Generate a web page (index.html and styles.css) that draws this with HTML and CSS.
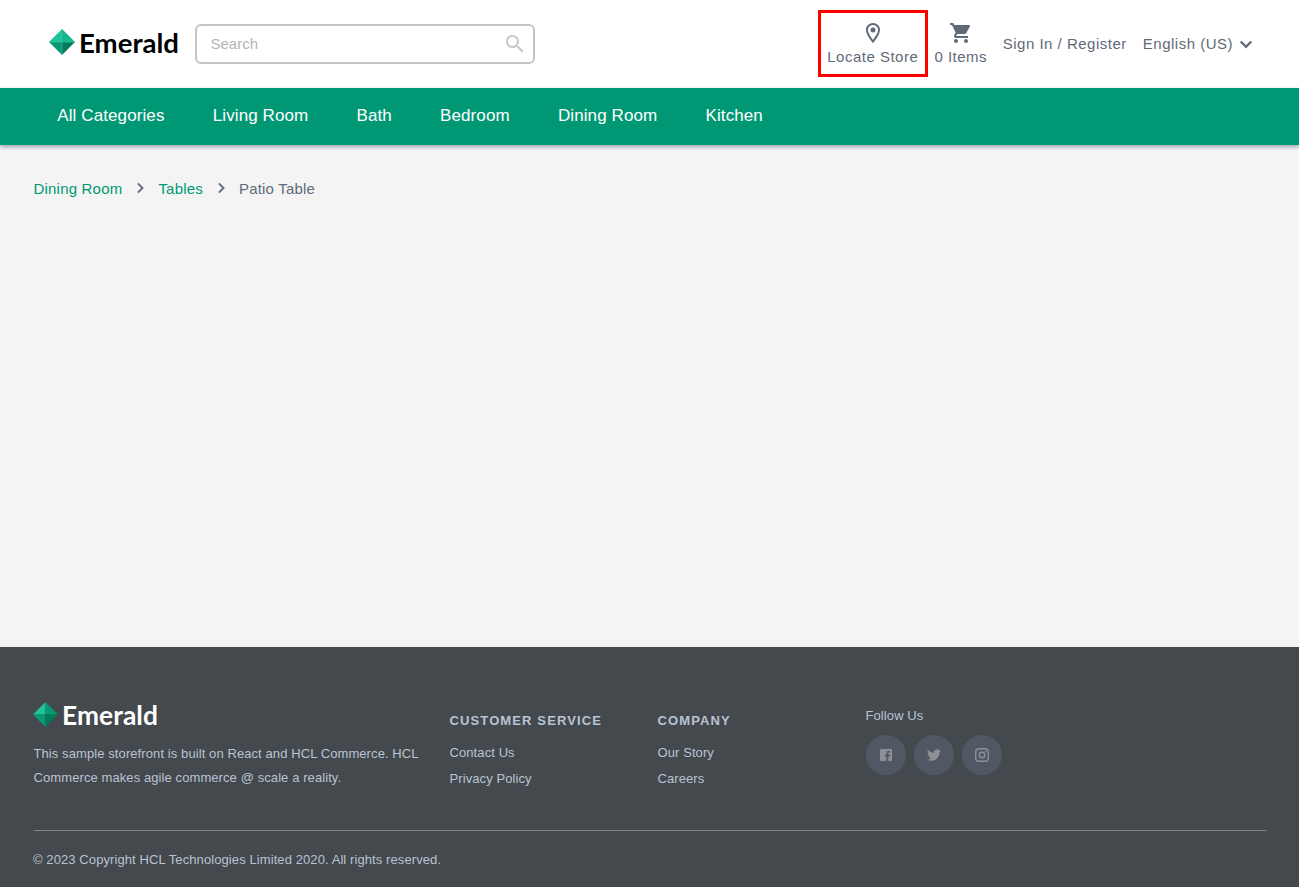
FILE: index.html
```html
<!DOCTYPE html>
<html lang="en">
<head>
<meta charset="utf-8">
<title>Emerald</title>
<link rel="stylesheet" href="styles.css">
</head>
<body>
<header class="header">
  <a class="logo">
    <svg class="gem" viewBox="0 0 26 26"><path fill="#1fc29c" d="M13 0v13H0z"/><path fill="#14b48c" d="M13 0l13 13H13z"/><path fill="#069a74" d="M0 13h13v13z"/><path fill="#047a5b" d="M13 13h13L13 26z"/><path stroke="#4cc5a5" stroke-width=".6" d="M13 0v26M0 13h26"/></svg>
    <svg class="wordmark" width="100" height="32"><text x="0" y="26" textLength="100" lengthAdjust="spacingAndGlyphs">Emerald</text></svg>
  </a>
  <div class="search">
    <span>Search</span>
    <svg width="24" height="24" viewBox="0 0 24 24"><path d="M15.5 14h-.79l-.28-.27C15.41 12.59 16 11.11 16 9.5 16 5.91 13.09 3 9.5 3S3 5.91 3 9.5 5.91 16 9.5 16c1.61 0 3.09-.59 4.23-1.57l.27.28v.79l5 4.99L20.49 19l-4.99-5zm-6 0C7.01 14 5 11.99 5 9.5S7.01 5 9.5 5 14 7.01 14 9.5 11.99 14 9.5 14z"/></svg>
  </div>
  <nav class="tools">
    <a class="tool locate">
      <svg width="24" height="24" viewBox="0 0 24 24"><path d="M12 2C8.13 2 5 5.13 5 9c0 5.25 7 13 7 13s7-7.75 7-13c0-3.87-3.13-7-7-7zM7 9c0-2.76 2.24-5 5-5s5 2.24 5 5c0 2.88-2.88 7.19-5 9.88C9.92 16.21 7 11.85 7 9z"/><circle cx="12" cy="9" r="2.5"/></svg>
      <span>Locate Store</span>
    </a>
    <a class="tool cart">
      <svg width="24" height="24" viewBox="0 0 24 24"><path d="M7 18c-1.1 0-1.99.9-1.99 2S5.900 22 7 22s2-.9 2-2-.9-2-2-2zM1 2v2h2l3.600 7.590-1.350 2.450c-.16.28-.25.61-.25.96 0 1.100.9 2 2 2h12v-2H7.420c-.14 0-.25-.11-.25-.25l.03-.12.900-1.630h7.450c.75 0 1.410-.41 1.750-1.030l3.580-6.490c.08-.14.12-.31.12-.48 0-.55-.45-1-1-1H5.210l-.94-2H1zm16 16c-1.100 0-1.990.9-1.990 2s.89 2 1.990 2 2-.9 2-2-.9-2-2-2z"/></svg>
      <span>0 Items</span>
    </a>
    <a class="signin">Sign In / Register</a>
    <a class="language">English (US)<svg width="24" height="24" viewBox="0 0 24 24"><path d="M6.700 9.500l5.300 5.300 5.300-5.300" fill="none" stroke="#5f6a79" stroke-width="2.300"/></svg></a>
  </nav>
</header>
<nav class="categories">
  <a>All Categories</a><a>Living Room</a><a>Bath</a><a>Bedroom</a><a>Dining Room</a><a>Kitchen</a>
</nav>
<main class="content">
  <div class="crumbs">
    <a>Dining Room</a>
    <svg width="20" height="20" viewBox="0 0 24 24"><path d="M9.500 6.500l5.500 5.500-5.500 5.500" fill="none" stroke="#5f6a79" stroke-width="2.300"/></svg>
    <a>Tables</a>
    <svg width="20" height="20" viewBox="0 0 24 24"><path d="M9.500 6.500l5.500 5.500-5.500 5.500" fill="none" stroke="#5f6a79" stroke-width="2.300"/></svg>
    <span>Patio Table</span>
  </div>
</main>
<footer class="footer">
  <div class="columns">
    <section class="about">
      <a class="logo">
        <svg class="gem" viewBox="0 0 26 26"><path fill="#1fc29c" d="M13 0v13H0z"/><path fill="#069a74" d="M13 0l13 13H13z"/><path fill="#069a74" d="M0 13h13v13z"/><path fill="#047a5b" d="M13 13h13L13 26z"/></svg>
        <svg class="wordmark" width="96" height="30"><text x="0" y="25" textLength="96" lengthAdjust="spacingAndGlyphs">Emerald</text></svg>
      </a>
      <p>This sample storefront is built on React and HCL Commerce. HCL<br>Commerce makes agile commerce @ scale a reality.</p>
    </section>
    <section class="links"><h2>CUSTOMER SERVICE</h2><a>Contact Us</a><a>Privacy Policy</a></section>
    <section class="links"><h2>COMPANY</h2><a>Our Story</a><a>Careers</a></section>
    <section class="follow">
      <span>Follow Us</span>
      <div class="socials">
        <a><svg width="12" height="12" viewBox="0 0 12 12"><path d="M.7 0h10.600q.7 0 .7.700v10.600q0 .7-.7.700H8.300V7.400h1.550l.25-1.850H8.300V4.400c0-.55.15-.9.900-.9h.95V1.850C10 1.830 9.450 1.780 8.750 1.780c-1.400 0-2.350.85-2.350 2.420v1.350H4.850V7.400H6.400V12H.7Q0 12 0 11.300V.7Q0 0 .7 0z"/></svg></a>
        <a><svg width="14" height="14" viewBox="0 0 24 24"><path d="M23.950 4.570a10 10 0 0 1-2.820.77 4.960 4.960 0 0 0 2.160-2.720c-.95.550-2 .96-3.130 1.180a4.920 4.920 0 0 0-8.380 4.480C7.690 8.100 4.070 6.130 1.640 3.160a4.820 4.820 0 0 0-.67 2.480c0 1.710.87 3.210 2.190 4.100a4.900 4.900 0 0 1-2.230-.62v.06a4.920 4.920 0 0 0 3.950 4.830 5 5 0 0 1-2.210.08 4.940 4.940 0 0 0 4.600 3.420A9.870 9.870 0 0 1 0 19.540a13.990 13.990 0 0 0 7.550 2.210c9.050 0 14-7.500 14-13.980 0-.21 0-.42-.02-.63a9.940 9.940 0 0 0 2.460-2.550z"/></svg></a>
        <a><svg width="14" height="14" viewBox="0 0 14 14"><rect x=".7" y=".7" width="12.600" height="12.600" rx="3.300" fill="none" stroke="#8d9196" stroke-width="1.400"/><circle cx="7" cy="7" r="2.800" fill="none" stroke="#8d9196" stroke-width="1.400"/><circle cx="10.600" cy="3.400" r=".8"/></svg></a>
      </div>
    </section>
  </div>
  <div class="copyright">© 2023 Copyright HCL Technologies Limited 2020. All rights reserved.</div>
</footer>
</body>
</html>
```

FILE: styles.css
```css
* { box-sizing: border-box; }
body {
  margin: 0;
  height: 887px;
  display: flex;
  flex-direction: column;
  background: #f4f4f4;
  color: #5f6a79;
  font: 15px/20px "Liberation Sans", Arial, sans-serif;
  white-space: nowrap;
}
svg { flex: none; display: block; fill: currentColor; }
.header {
  height: 88px;
  padding: 0 41.5px 0 49.4px;
  display: flex;
  align-items: center;
  background: #fff;
}
.logo { display: flex; align-items: center; }
.gem { width: 26px; height: 26px; margin-bottom: 1px; }
.wordmark { font: 700 27px Lato, sans-serif; overflow: visible; }
.header .logo { width: 145.6px; color: #000; gap: 4px; padding-bottom: 3px; }
.search {
  width: 340px;
  height: 40px;
  padding: 0 6px 0 13.5px;
  border: 2px solid #c4c4c4;
  border-radius: 6px;
  display: flex;
  align-items: center;
  justify-content: space-between;
  color: #b5b5b5;
}
.search svg { color: #c8c8c8; }
.tools {
  height: 67px;
  margin: 0 0 1px auto;
  display: flex;
  align-items: center;
  letter-spacing: .5px;
}
.tool { display: flex; flex-direction: column; align-items: center; }
.tool span { line-height: 24px; }
.locate {
  width: 110px;
  height: 67px;
  padding-top: 8px;
  border: 3px solid #f00;
}
.cart { width: 66px; height: 67px; padding-top: 11px; }
.signin { margin: 0 16px 0 9px; }
.language { display: flex; align-items: center; height: 24px; }
.language svg { margin: 1px 0 0 .5px; }
.categories {
  height: 57px;
  padding: 18px 57.3px 0;
  display: flex;
  gap: 48.2px;
  flex: none;
  position: relative;
  background: #009874;
  color: #fff;
  font-size: 17px;
  letter-spacing: .1px;
  box-shadow: 0 2px 4px rgba(95, 106, 140, .6);
}
.content { flex: 1; padding: 34px 33.5px; }
.crumbs { display: flex; align-items: center; height: 20px; letter-spacing: .2px; }
.crumbs svg { margin: 0 8px; position: relative; top: -1px; }
.crumbs a { color: #009874; }
.footer {
  height: 240px;
  padding: 53px 33px 0 33.5px;
  background: #44494d;
  color: #b9c3d3;
  font-size: 13px;
  letter-spacing: .09px;
}
.columns {
  height: 131px;
  display: grid;
  grid-template-columns: 416px 208px 208px 1fr;
  border-bottom: 1px solid #85888b;
}
.about .logo { color: #fff; gap: 4px; margin-left: -.5px; }
.about .gem { width: 25px; height: 25px; }
.about .wordmark { font-size: 26px; }
.about p { margin: 12px 0 0; line-height: 24px; }
.links { display: flex; flex-direction: column; padding-top: 11px; }
.links h2 { margin: 0 0 9px; font-size: 13px; line-height: 20px; letter-spacing: 1.12px; }
.links a { line-height: 26px; }
.follow { padding-top: 6px; }
.socials { display: flex; gap: 8px; margin: 9px 0 0 .5px; }
.socials a {
  width: 40px;
  height: 40px;
  border-radius: 50%;
  display: grid;
  place-items: center;
  background: #505963;
  color: #8d9196;
}
.copyright { padding-top: 19px; margin-left: -.5px; }
```
